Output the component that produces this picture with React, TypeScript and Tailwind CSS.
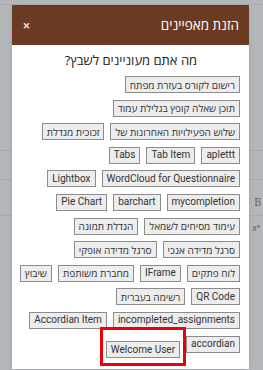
import React from "react"

const rows: string[][] = [
  ["רישום לקורס בעזרת מפתח"],
  ["תוכן שאלה קופץ בגלילת עמוד"],
  ["שלוש הפעילויות האחרונות של", "זכוכית מגדלת"],
  ["aplettt", "Tab Item", "Tabs"],
  ["WordCloud for Questionnaire", "Lightbox"],
  ["mycompletion", "barchart", "Pie Chart"],
  ["עימוד מסיחים לשמאל", "הגדלת תמונה"],
  ["סרגל מדידה אנכי", "סרגל מדידה אופקי"],
  ["לוח פתקים", "IFrame", "מחברת משותפת", "שיבוץ"],
  ["QR Code", "רשימה בעברית"],
  ["incompleted_assignments", "Accordian Item"],
  ["accordian", "Welcome User"],
]

const hebrew = /[\u0590-\u05FF]/
const heFont = { fontFamily: "'Open Sans', 'Liberation Sans', sans-serif" }

function Btn({ label }: { label: string }) {
  const he = hebrew.test(label)
  return (
    <button
      className="h-[17px] px-[4px] bg-[#ededed] border border-[#8c8c8c] text-[#333] text-[10px] leading-none whitespace-nowrap"
      style={he ? heFont : undefined}
    >
      {label}
    </button>
  )
}

export default function App() {
  return (
    <div
      className="relative w-[263px] h-[370px] bg-[#b4b7b9] overflow-hidden"
      style={{ fontFamily: "Roboto, 'Liberation Sans', sans-serif" }}
    >
      {/* faint editor behind the overlay */}
      <div className="absolute inset-x-0 top-0 h-[5px] border-b border-[#a9acae]" />
      <div className="absolute inset-x-0 top-[150px] h-px bg-[#a7aaac]" />
      <div className="absolute inset-x-0 top-[179px] h-px bg-[#a7aaac]" />
      <div className="absolute inset-x-0 top-[215px] h-px bg-[#a7aaac]" />
      <div className="absolute right-[2px] top-[193px] text-[12px] text-[#666] font-serif">B</div>
      <div className="absolute right-[3px] top-[222px] text-[9px] text-[#666]">x²</div>

      <div className="absolute left-[12px] top-[5px] w-[237px] shadow-md" dir="rtl">
        <div className="h-[40px] bg-[#6b3a22] flex items-center justify-between pl-[11px] pr-[10px]">
          <span className="text-white text-[13.5px]" style={heFont}>הזנת מאפיינים</span>
          <span className="text-[#e6d6cc] text-[13px] font-bold leading-none">×</span>
        </div>
        <div className="bg-white pt-[5px] pb-[9px] pl-[10px] pr-[9px]">
          <div className="text-center text-[13px] text-[#222] leading-[20px] mb-[6px]" style={heFont}>
            מה אתם מעוניינים לשבץ?
          </div>
          <div className="flex flex-col gap-[6.6px]">
            {rows.map((row, i) => (
              <div key={i} className="flex gap-[6px]">
                {row.map((l) =>
                  l === "Welcome User" ? (
                    <div key={l} className="relative">
                      <Btn label={l} />
                      <span className="absolute -left-[6px] -right-[6px] -top-[9px] -bottom-[6px] border-[3px] border-[#e8000b]" />
                    </div>
                  ) : (
                    <Btn key={l} label={l} />
                  )
                )}
              </div>
            ))}
          </div>
        </div>
      </div>
    </div>
  )
}
